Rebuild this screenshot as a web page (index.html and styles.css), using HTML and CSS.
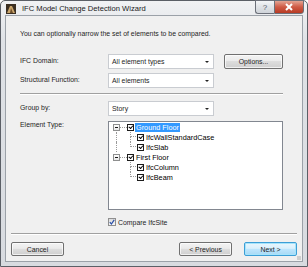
FILE: index.html
```html
<html lang="en"><head>
    <meta charset="UTF-8">
    <title>IFC Model Change Detection Wizard</title>
    <link rel="stylesheet" href="styles.css">
  </head>
  <body>
    <main class="window">
      <section class="titlebar">
        <svg class="app-icon" width="10" height="10" viewBox="0 0 10 10">
          <rect width="10" height="10" fill="#3b2f22"/>
          <path d="M1 9 L4 2 L6 2 L9 9 Z" fill="#c9a46a"/>
          <path d="M4 9 L5 4 L7 9 Z" fill="#6e4f2a"/>
        </svg>
        <span class="title">IFC Model Change Detection Wizard</span>
        <div class="caption">
          <div class="cap help">?</div>
          <div class="cap close">
            <svg width="10" height="8" viewBox="0 0 10 8"><path d="M2 1 L8 7 M8 1 L2 7" stroke="#fff" stroke-width="2"/></svg>
          </div>
        </div>
      </section>

      <section class="client">
        <p class="intro">You can optionally narrow the set of elements to be compared.</p>

        <div class="form">
          <label class="lbl">IFC Domain:</label>
          <div class="ctl">
            <div class="combo">All element types<span class="arrow"></span></div>
            <button class="btn options">Options...</button>
          </div>

          <label class="lbl">Structural Function:</label>
          <div class="ctl">
            <div class="combo">All elements<span class="arrow"></span></div>
          </div>

          <div class="sep"></div>

          <label class="lbl">Group by:</label>
          <div class="ctl">
            <div class="combo">Story<span class="arrow"></span></div>
          </div>

          <label class="lbl lbl-tree">Element Type:</label>
          <div class="ctl">
            <div class="tree">
              <div class="node root">
                <span class="expander"><span class="box"></span><span class="hline"></span></span>
                <span class="chk"></span>
                <span class="name selected">Ground Floor</span>
              </div>
              <div class="node child">
                <span class="rootline"></span>
                <span class="conn"><span class="up"></span><span class="down"></span></span>
                <span class="chk"></span>
                <span class="name">IfcWallStandardCase</span>
              </div>
              <div class="node child">
                <span class="rootline"></span>
                <span class="conn last"><span class="up"></span><span class="down"></span></span>
                <span class="chk"></span>
                <span class="name">IfcSlab</span>
              </div>
              <div class="node root">
                <span class="expander"><span class="box"></span><span class="hline"></span></span>
                <span class="chk"></span>
                <span class="name">First Floor</span>
              </div>
              <div class="node child">
                <span class="rootline none"></span>
                <span class="conn"><span class="up"></span><span class="down"></span></span>
                <span class="chk"></span>
                <span class="name">IfcColumn</span>
              </div>
              <div class="node child">
                <span class="rootline none"></span>
                <span class="conn last"><span class="up"></span><span class="down"></span></span>
                <span class="chk"></span>
                <span class="name">IfcBeam</span>
              </div>
            </div>
          </div>

          <div class="ctl site">
            <span class="aero-chk">
              <svg width="6" height="6" viewBox="0 0 6 6"><path d="M0.8 3.2 L2.4 5 L5.2 0.8" fill="none" stroke="#2a4fa8" stroke-width="1.2"/></svg>
            </span>
            <span>Compare IfcSite</span>
          </div>
        </div>

        <div class="footer">
          <div class="sep wide"></div>
          <div class="buttons">
            <button class="btn">Cancel</button>
            <span class="spacer"></span>
            <button class="btn">&lt; Previous</button>
            <button class="btn next">Next &gt;</button>
          </div>
        </div>
        <div class="grip"></div>
      </section>
    </main>
  </body>
</html>
```
FILE: styles.css
```css
* {
    margin: 0;
    padding: 0;
    box-sizing: border-box;
}
body {
    width: 308px;
    height: 267px;
    background: #ffffff;
    font-family: 'Liberation Sans', Arial, sans-serif;
    font-size: 6.9px;
    color: #1e1e1e;
}
.window {
    width: 308px;
    height: 267px;
    border: 1px solid #5b5f66;
    border-radius: 5px 5px 0 0;
    background: linear-gradient(#f1f2f4, #dfe2e6 40px, #d8dbe0);
    padding: 0 4px 4px 4px;
    display: flex;
    flex-direction: column;
}
.titlebar {
    height: 18px;
    display: flex;
    align-items: center;
}
.app-icon {
    margin-left: 1px;
    margin-top: 1px;
}
.title {
    margin-left: 6px;
    margin-top: 1px;
    font-size: 7.6px;
    color: #1a1a1a;
}
.caption {
    margin-left: auto;
    margin-right: -1px;
    align-self: flex-start;
    margin-top: -1px;
    display: flex;
}
.cap {
    height: 14px;
    border: 1px solid #6c7079;
    display: flex;
    align-items: center;
    justify-content: center;
}
.help {
    width: 19px;
    border-radius: 0 0 0 3px;
    border-right: none;
    background: linear-gradient(#f4f5f7, #dfe2e6 50%, #cfd3d9);
    color: #59606a;
    font-size: 8px;
}
.close {
    width: 30px;
    border-radius: 0 0 3px 0;
    background: linear-gradient(#e3a493, #cf5a45 50%, #b73b25);
}
.client {
    flex: 1;
    border: 1px solid #9ba1a8;
    background: #f0f0f0;
    display: flex;
    flex-direction: column;
}
.intro {
    margin-top: 13px;
    padding-left: 14px;
    line-height: 10px;
}
.form {
    margin-top: 15px;
    padding-left: 14px;
    display: grid;
    grid-template-columns: 88px 175px;
    row-gap: 4px;
}
.lbl {
    line-height: 10px;
    padding-top: 2px;
}
.lbl-tree {
    padding-top: 0;
}
.ctl {
    display: flex;
    align-items: flex-start;
}
.combo {
    width: 106px;
    height: 15px;
    background: #fff;
    border: 1px solid #c9ccd1;
    padding-left: 3px;
    line-height: 13px;
    display: flex;
}
.arrow {
    margin-left: auto;
    margin-right: 4px;
    margin-top: 6px;
    width: 0;
    height: 0;
    border-left: 2px solid transparent;
    border-right: 2px solid transparent;
    border-top: 2px solid #222;
}
.sep {
    grid-column: 1 / 3;
    height: 2px;
    border-top: 1px solid #a0a0a0;
    border-bottom: 1px solid #ffffff;
    margin: 1px 0 2px 0;
}
.btn {
    height: 14px;
    width: 53px;
    border: 1px solid #707070;
    border-radius: 2px;
    background: linear-gradient(#f3f3f3, #ebebeb 45%, #dddddd 50%, #cfcfcf);
    font-family: inherit;
    font-size: 6.9px;
    color: #1e1e1e;
    box-shadow: inset 0 0 0 1px rgba(255, 255, 255, 0.7);
}
.options {
    width: 59px;
    height: 15px;
    margin-left: 10px;
}
.tree {
    width: 175px;
    height: 89px;
    margin-top: 1px;
    background: #fff;
    border: 1px solid #828790;
    padding-left: 4px;
    font-size: 7.3px;
    color: #000;
}
.node {
    height: 10px;
    display: flex;
    align-items: center;
}
.expander {
    width: 14px;
    height: 10px;
    display: flex;
    align-items: center;
}
.expander .box {
    width: 7px;
    height: 7px;
    border: 1px solid #8e8f8f;
    background: linear-gradient(#ffffff, #e6e6e6);
}
.expander .box::after {
    content: "";
    display: block;
    margin: 2px 1px 0 1px;
    height: 1px;
    background: #1a1a1a;
}
.expander .hline {
    width: 7px;
    border-top: 1px dotted #9a9a9a;
}
.chk {
    width: 7px;
    height: 7px;
    border: 1px solid #1c1c1c;
    background: #fff;
    display: flex;
    align-items: center;
    justify-content: center;
}
.chk::after {
    content: "";
    width: 2px;
    height: 3px;
    border-right: 1px solid #000;
    border-bottom: 1px solid #000;
    transform: rotate(40deg) translate(0, -0.5px);
}
.name {
    margin-left: 1px;
    padding: 0 1px;
    line-height: 9px;
    height: 9px;
    color: #000;
    font-weight: normal;
}
.name.selected {
    background: #3399ff;
    color: #fff;
}
.rootline {
    width: 14px;
    height: 10px;
    margin-left: 3px;
    margin-right: -3px;
    border-left: 1px dotted #9a9a9a;
}
.rootline.none {
    border-left-color: transparent;
}
.conn {
    width: 10px;
    height: 10px;
    display: flex;
    flex-direction: column;
}
.conn .up {
    height: 5px;
    margin: 0 1px 0 3px;
    border-left: 1px dotted #9a9a9a;
    border-bottom: 1px dotted #9a9a9a;
}
.conn .down {
    height: 5px;
    margin-left: 3px;
    border-left: 1px dotted #9a9a9a;
}
.conn.last .down {
    border-left-color: transparent;
}
.site {
    grid-column: 2;
    margin-top: 3px;
    height: 10px;
    align-items: center;
    gap: 2px;
}
.aero-chk {
    width: 8px;
    height: 8px;
    border: 1px solid #8f8f8f;
    background: linear-gradient(#dcdcdc, #f6f6f6);
    display: flex;
    align-items: center;
    justify-content: center;
}
.footer {
    padding: 0 5px;
    margin-top: 6px;
}
.sep.wide {
    margin: 0;
}
.buttons {
    margin-top: 7px;
    display: flex;
    gap: 12px;
}
.spacer {
    flex: 1;
}
.next {
    border-color: #3c9ed6;
    background: linear-gradient(#eaf6fd, #d9f0fc 45%, #bee6fd 50%, #a7d9f5);
    box-shadow: inset 0 0 0 1px #a6e4fb;
}
.grip {
    width: 4px;
    height: 4px;
    margin: auto 1px 1px auto;
    background: radial-gradient(circle, #a7a7a7 0.6px, transparent 0.8px) 0 0 / 2px 2px;
}
```
